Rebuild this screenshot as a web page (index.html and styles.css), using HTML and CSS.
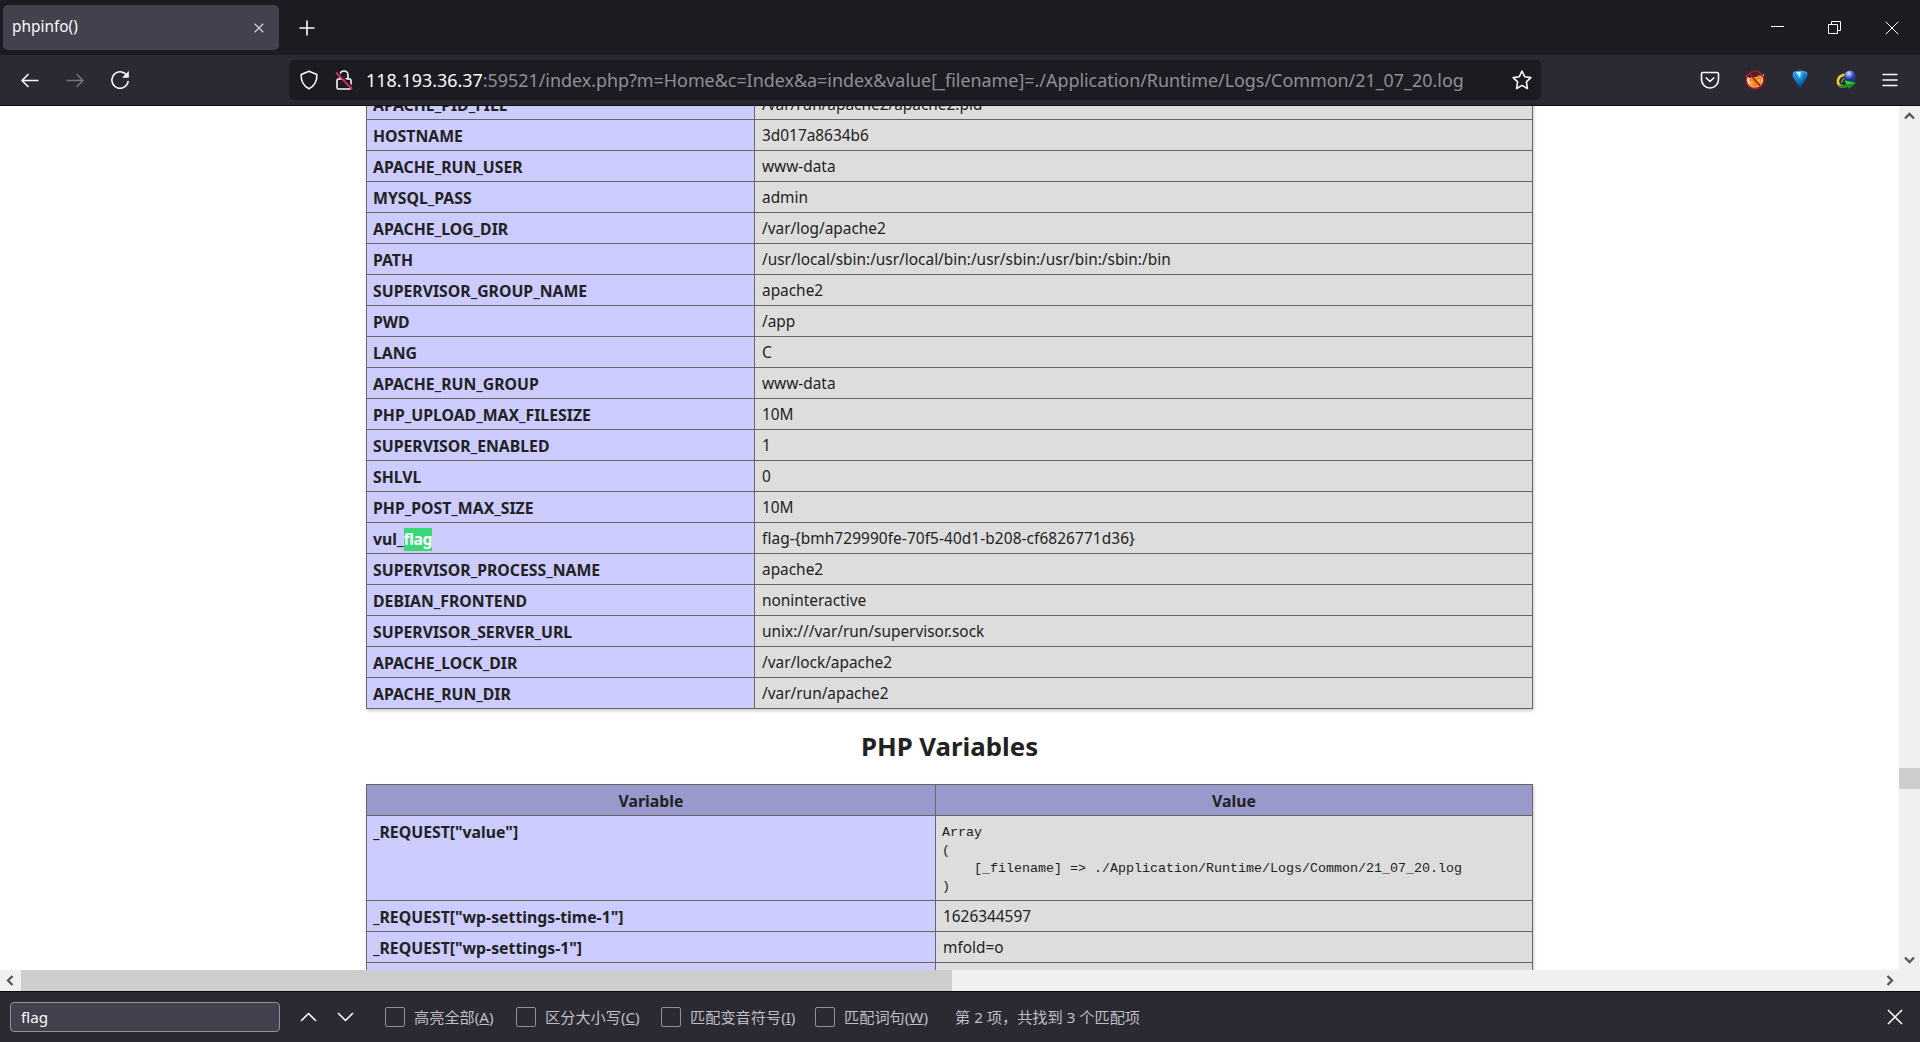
FILE: index.html
```html
<!DOCTYPE html>
<html lang="zh-CN">
<head>
<meta charset="utf-8">
<title>phpinfo()</title>
<link rel="stylesheet" href="styles.css">
</head>
<body>
<header class="tabs">
  <div class="tab"><span class="tab-title">phpinfo()</span><svg class="tab-close" width="10" height="10" viewBox="0 0 10 10"><path d="M.7.7l8.600 8.600M9.300.7L.7 9.300"/></svg></div>
  <svg class="new-tab" width="16" height="16" viewBox="0 0 16 16"><path d="M8 .5v15M.5 8h15"/></svg>
  <div class="window-buttons">
    <svg width="13" height="13" viewBox="0 0 13 13"><path d="M0 5.500h13"/></svg>
    <svg width="13" height="13" viewBox="0 0 13 13"><path d="M.5 3.500h9v9h-9zM3.500 3.500v-3h9v9h-3"/></svg>
    <svg width="14" height="14" viewBox="0 0 14 14"><path d="M.7.7l12.600 12.600M13.300.7L.7 13.300"/></svg>
  </div>
</header>
<nav class="toolbar">
  <div class="nav-buttons">
    <svg width="20" height="20" viewBox="0 0 20 20"><path d="M18.500 10.500H2M8.500 4L2 10.500 8.500 17"/></svg>
    <svg class="disabled" width="20" height="20" viewBox="0 0 20 20"><path d="M1.500 10.500H18M11.500 4l6.500 6.500-6.500 6.500"/></svg>
    <svg width="20" height="20" viewBox="0 0 20 20"><path d="M18.200 11A8.200 8.200 0 1 1 15 3.500l2 2"/><path class="solid" d="M18.800 1v6.800h-6.800z"/></svg>
  </div>
  <div class="urlbar">
    <svg width="20" height="20" viewBox="0 0 20 20"><path d="M10 1.200L17.800 4.400C18.300 11 15.500 15.800 10 18.800 4.500 15.800 1.700 11 2.200 4.400z"/></svg>
    <svg class="lock" width="18" height="20" viewBox="0 0 18 20"><path d="M5 9V5a4 4 0 0 1 8 0v4M3.500 9h11a1.500 1.500 0 0 1 1.500 1.500v7a1.500 1.500 0 0 1-1.500 1.500h-11a1.500 1.500 0 0 1-1.500-1.500v-7a1.500 1.500 0 0 1 1.500-1.500z"/><path class="slash-gap" d="M2 1.500l16 16"/><path class="slash" d="M1 2.500l16 16.500"/></svg>
    <span class="url"><b>118.193.36.37</b>:59521/index.php?m=Home&amp;c=Index&amp;a=index&amp;value[_filename]=./Application/Runtime/Logs/Common/21_07_20.log</span>
    <svg class="star" width="20" height="20" viewBox="0 0 20 20"><path d="M10 1.200l2.700 5.500 6.100.9-4.400 4.300 1 6.600L10 15.400 4.600 18.500l1-6.600L1.200 7.600l6.100-.9z"/></svg>
  </div>
  <div class="extensions">
    <svg width="20" height="20" viewBox="0 0 20 20"><path d="M3 2.500h14a1.500 1.500 0 0 1 1.500 1.500V9.500a8.500 8.500 0 0 1-17 0V4A1.500 1.500 0 0 1 3 2.500zM5.800 7.500l4.200 4 4.200-4"/></svg>
    <svg class="art" width="20" height="20" viewBox="0 0 20 20"><path fill="#4a2330" d="M5 4l5-2 6 3v4H4z"/><path fill="#f8eed8" d="M1 5l3 3 9-1 6-3-1 8-3 5-9 1-4-5z"/><path fill="#ef8b22" d="M4 9l3-2 2 2 5-4 3 2-1 7-6 4-5-3z"/><path fill="#ffc04c" d="M5 11l3 1-1 3zM12 10l3-1-1 4z"/><circle cx="10" cy="10" r="8.800" fill="none" stroke="#b21522" stroke-width="1.700"/><path d="M4 3l12 14" stroke="#b21522" stroke-width="1.700"/></svg>
    <svg class="art" width="20" height="20" viewBox="0 0 20 20"><defs><linearGradient id="gem" x2="0" y2="1"><stop stop-color="#35a9ee"/><stop offset=".5" stop-color="#148bdc"/><stop offset="1" stop-color="#073a79"/></linearGradient></defs><path fill="url(#gem)" d="M3 2q7-3 14 0l.5 3L11 17.500 9.500 18 2.500 6z"/><path fill="#d2f3ff" d="M6 2h5L10 8z"/><path fill="#064e98" d="M14 3l3 2-7 13z" opacity=".5"/></svg>
    <svg class="art" width="22" height="20" viewBox="0 0 22 20"><defs><radialGradient id="globe" cx=".4" cy=".25"><stop stop-color="#e7edff"/><stop offset=".5" stop-color="#667edb"/><stop offset="1" stop-color="#26368e"/></radialGradient></defs><path d="M12 5C6 4 2 8 3 13c1 3 4 4 8 3" fill="none" stroke="#e5cd3b" stroke-width="2.500"/><path d="M12 8c-4 0-6 3-5 5" fill="none" stroke="#6c9d32" stroke-width="1.500"/><circle cx="15" cy="6.500" r="6" fill="url(#globe)"/><path fill="#178e20" d="M2.500 14q4 3 8.500 0l-1.500-3.500L21 13l-7 6-1-2q-7 3-10.500-3z"/><path fill="#30d52b" d="M9.500 10.500L21 13l-9 1.500z"/></svg>
    <svg width="16" height="16" viewBox="0 0 16 16"><path d="M.5 2.500h15M.5 8h15M.5 13.500h15"/></svg>
  </div>
</nav>
<main class="viewport">
  <div class="page">
    <table class="env"><tbody>
      <tr><th>APACHE_PID_FILE</th><td>/var/run/apache2/apache2.pid</td></tr>
      <tr><th>HOSTNAME</th><td>3d017a8634b6</td></tr>
      <tr><th>APACHE_RUN_USER</th><td>www-data</td></tr>
      <tr><th>MYSQL_PASS</th><td>admin</td></tr>
      <tr><th>APACHE_LOG_DIR</th><td>/var/log/apache2</td></tr>
      <tr><th>PATH</th><td>/usr/local/sbin:/usr/local/bin:/usr/sbin:/usr/bin:/sbin:/bin</td></tr>
      <tr><th>SUPERVISOR_GROUP_NAME</th><td>apache2</td></tr>
      <tr><th>PWD</th><td>/app</td></tr>
      <tr><th>LANG</th><td>C</td></tr>
      <tr><th>APACHE_RUN_GROUP</th><td>www-data</td></tr>
      <tr><th>PHP_UPLOAD_MAX_FILESIZE</th><td>10M</td></tr>
      <tr><th>SUPERVISOR_ENABLED</th><td>1</td></tr>
      <tr><th>SHLVL</th><td>0</td></tr>
      <tr><th>PHP_POST_MAX_SIZE</th><td>10M</td></tr>
      <tr><th>vul_<mark>flag</mark></th><td class="flag">flag-{bmh729990fe-70f5-40d1-b208-cf6826771d36}</td></tr>
      <tr><th>SUPERVISOR_PROCESS_NAME</th><td>apache2</td></tr>
      <tr><th>DEBIAN_FRONTEND</th><td>noninteractive</td></tr>
      <tr><th>SUPERVISOR_SERVER_URL</th><td>unix:///var/run/supervisor.sock</td></tr>
      <tr><th>APACHE_LOCK_DIR</th><td>/var/lock/apache2</td></tr>
      <tr><th>APACHE_RUN_DIR</th><td>/var/run/apache2</td></tr>
    </tbody></table>
    <h2>PHP Variables</h2>
    <table class="vars">
      <thead><tr><th>Variable</th><th>Value</th></tr></thead>
      <tbody>
      <tr><th>_REQUEST["value"]</th><td class="dump"><pre>Array
(
    [_filename] =&gt; ./Application/Runtime/Logs/Common/21_07_20.log
)</pre></td></tr>
      <tr><th>_REQUEST["wp-settings-time-1"]</th><td>1626344597</td></tr>
      <tr><th>_REQUEST["wp-settings-1"]</th><td>mfold=o</td></tr>
      <tr><th></th><td></td></tr>
      </tbody>
    </table>
  </div>
  <div class="scroll-y">
    <svg width="11" height="8" viewBox="0 0 11 8"><path d="M1 6.500l4.500-4.500L10 6.500"/></svg>
    <i></i>
    <svg width="11" height="8" viewBox="0 0 11 8"><path d="M1 1.500L5.500 6 10 1.500"/></svg>
  </div>
  <div class="scroll-x">
    <svg width="8" height="11" viewBox="0 0 8 11"><path d="M6.500 1L2 5.500 6.500 10"/></svg>
    <i></i>
    <svg width="8" height="11" viewBox="0 0 8 11"><path d="M1.500 1L6 5.500 1.500 10"/></svg>
  </div>
</main>
<footer class="findbar">
  <div class="find-input">flag</div>
  <div class="find-nav">
    <svg width="17" height="10" viewBox="0 0 17 10"><path d="M1 9l7.500-7.500L16 9"/></svg>
    <svg width="17" height="10" viewBox="0 0 17 10"><path d="M1 1l7.500 7.500L16 1"/></svg>
  </div>
  <div class="option highlight"><i></i><span>高亮全部(<u>A</u>)</span></div>
  <div class="option case"><i></i><span>区分大小写(<u>C</u>)</span></div>
  <div class="option accents"><i></i><span>匹配变音符号(<u>I</u>)</span></div>
  <div class="option words"><i></i><span>匹配词句(<u>W</u>)</span></div>
  <span class="status">第 2 项，共找到 3 个匹配项</span>
  <svg class="find-close" width="16" height="16" viewBox="0 0 16 16"><path d="M1 1l14 14M15 1L1 15"/></svg>
</footer>
</body>
</html>
```

FILE: styles.css
```css
* { box-sizing: border-box; }
body {
  margin: 0;
  height: 1042px;
  overflow: hidden;
  display: flex;
  flex-direction: column;
  font: 15.4px/20px "Noto Sans", "Noto Sans CJK SC", sans-serif;
  background: #fff;
}
svg { display: block; flex: none; fill: none; stroke: #fbfbfe; stroke-width: 1.6; stroke-linejoin: round; }

.tabs { height: 55px; flex: none; display: flex; align-items: center; background: #1c1b22; padding-left: 3px; }
.tab {
  width: 276px; height: 45px; padding: 0 15px 0 9px;
  display: flex; align-items: center; justify-content: space-between;
  border-radius: 5px; background: #42414d; color: #fbfbfe; font-size: 15.4px;
}
.tab-title { padding-bottom: 2px; }
.tab-close { stroke: #d0d0d6; stroke-width: 1.3; }
.new-tab { margin-left: 20px; }
.window-buttons { margin-left: auto; padding-right: 21px; display: flex; gap: 44px; align-items: center; }
.window-buttons svg { stroke-width: 1; stroke: #fff; stroke-linejoin: miter; }

.toolbar { height: 51px; flex: none; display: flex; align-items: center; background: #2b2a33; border-bottom: 1px solid #0c0c0d; }
.nav-buttons { width: 289px; padding-left: 20px; display: flex; gap: 25px; }
.disabled { stroke: #76757e; }
.solid { fill: #fbfbfe; stroke: none; }
.urlbar {
  width: 1252px; height: 40px; padding: 0 9px 0 10px;
  display: flex; align-items: center;
  border-radius: 5px; background: #1c1b22;
}
.lock { margin: 0 13px 0 16px; }
.slash-gap { stroke: #1c1b22; }
.slash { stroke: #e22850; stroke-width: 1.8; }
.url { color: #8f8f98; font-size: 17.900px; white-space: nowrap; }
.url b { color: #fbfbfe; font-weight: 400; }
.star { margin-left: auto; }
.extensions { flex: 1; padding: 0 22px 0 159px; display: flex; justify-content: space-between; align-items: center; }
.art { stroke: none; }

.viewport { height: 885px; flex: none; display: grid; grid-template: 864px 21px / 1899px 21px; }
.page { overflow: hidden; padding-left: 366px; color: #222; display: flow-root; }
table { width: 1167px; table-layout: fixed; border-collapse: collapse; box-shadow: 1px 2px 3px #ccc; }
tr { height: 31px; }
th, td { border: 1px solid #666; padding: 2px 6px 0; text-align: left; }
th { background: #ccf; font-size: 15.8px; font-weight: 700; padding-top: 1px; }
td { background: #ddd; padding-left: 7px; }
.env { margin-top: -18px; }
.env th { width: 388px; }
.flag { letter-spacing: .09px; }
mark { background: #38d878; color: #fff; padding: 0 0 1px; letter-spacing: -.4px; }
h2 { margin: 22px 0 23px; width: 1167px; text-align: center; font-size: 25.8px; line-height: 30px; }
.vars th:first-child { width: 569px; }
.vars tbody th { vertical-align: top; padding-top: 6px; }
.vars thead th { background: #99c; text-align: center; }
td.dump { height: 85px; padding-left: 6px; }
pre { margin: 2px 0 0; font: 13.330px/18px "Liberation Mono", monospace; }

.scroll-y, .scroll-x { background: #f0f0f0; display: flex; align-items: center; }
.scroll-y { flex-direction: column; padding: 6px 0; }
.scroll-x { grid-column: 1 / 3; padding: 0 26px 0 6px; }
.viewport svg { stroke: #55555a; stroke-width: 2.300; stroke-linejoin: miter; }
.viewport i { background: #cdcdcd; }
.scroll-y i { width: 21px; height: 21px; margin: 648px 0 auto; }
.scroll-x i { width: 931px; height: 21px; margin: 0 auto 0 7px; }

.findbar {
  height: 51px; padding: 0 17px 0 10px;
  display: flex; align-items: center;
  background: #2b2a33; border-top: 1px solid #0c0c0d; color: #bfbfc4; font-size: 15.2px;
}
.find-input { width: 270px; height: 30px; padding: 4px 10px; border: 1px solid #8f8f9d; border-radius: 4px; background: #42414d; color: #fbfbfe; }
.find-nav { width: 105px; padding-left: 20px; display: flex; gap: 20px; }
.option { display: flex; align-items: center; gap: 9px; white-space: nowrap; }
.option i { width: 20px; height: 20px; border: 1px solid #8f8f9d; border-radius: 2px; }
.highlight { width: 131px; }
.case { width: 145px; }
.accents { width: 154px; }
.words { width: 140px; }
.find-close { margin-left: auto; }
```
